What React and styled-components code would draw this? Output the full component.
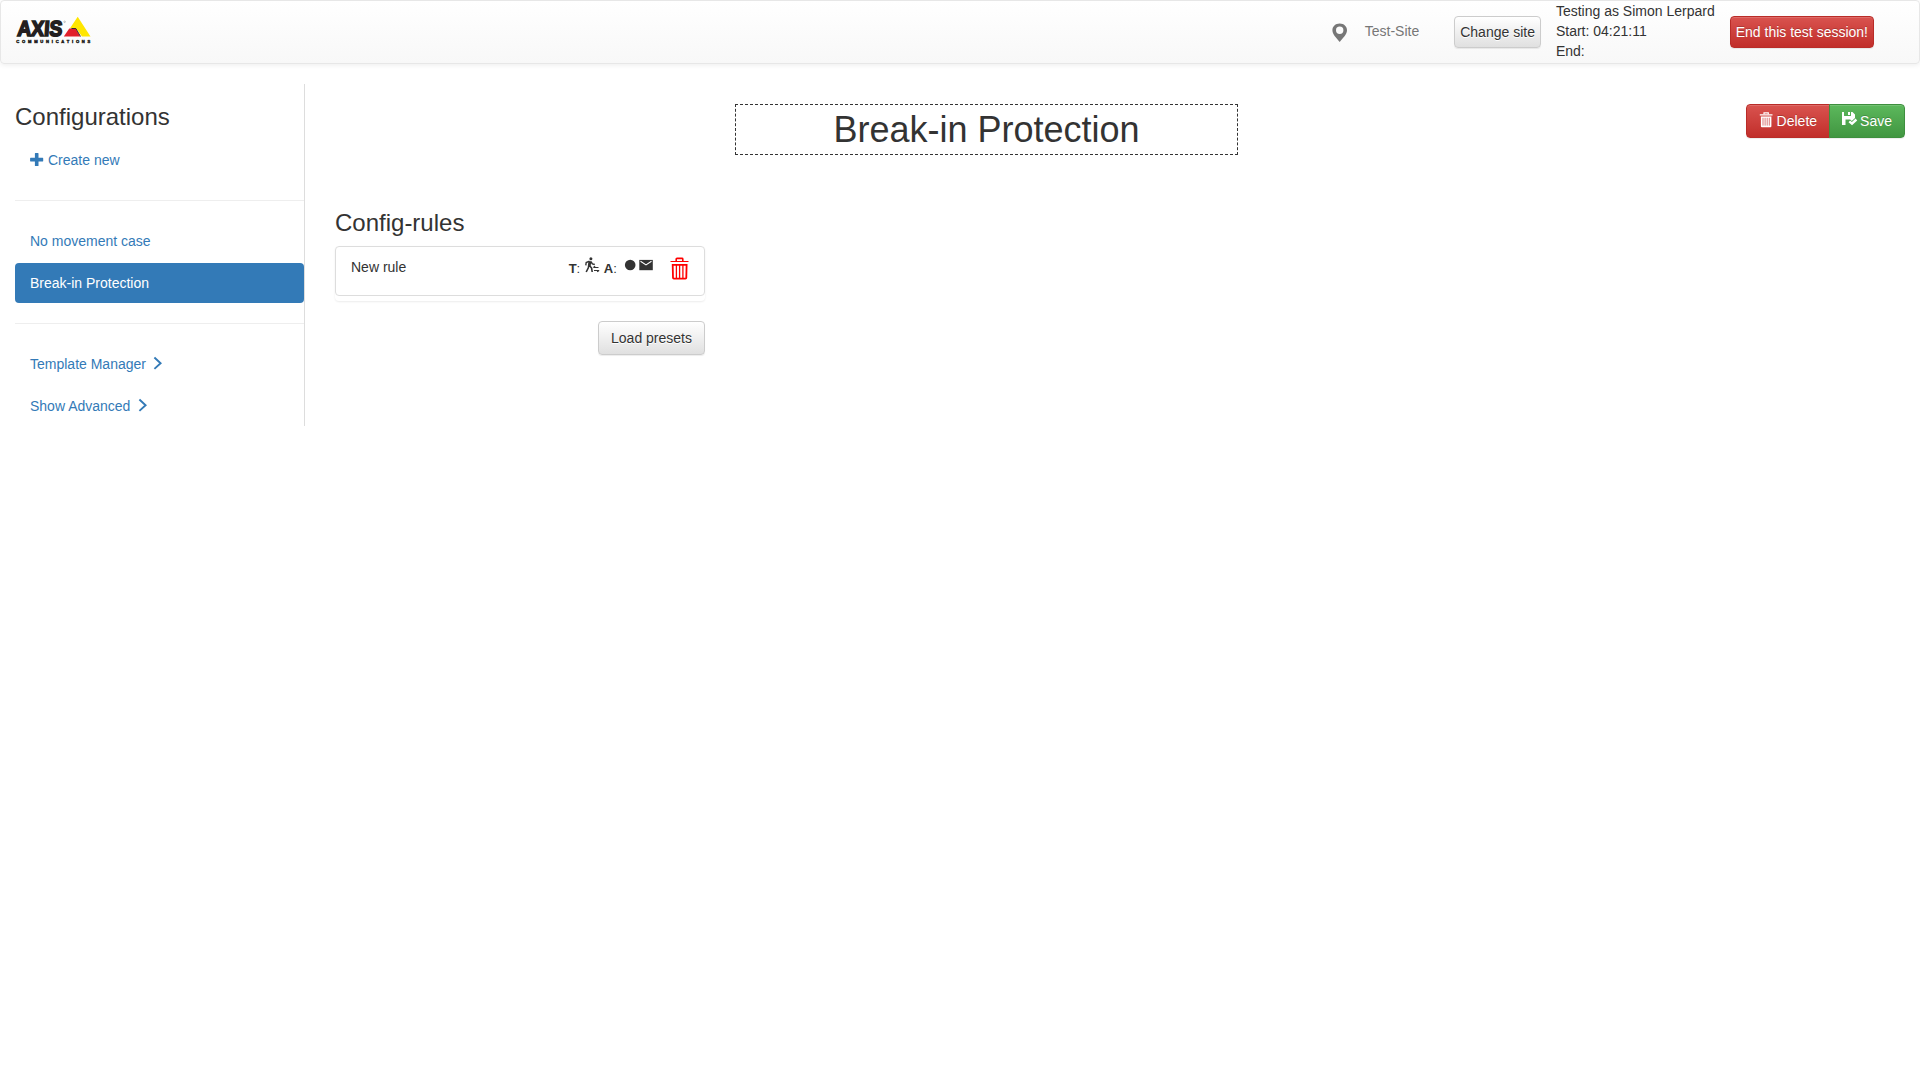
import React from "react";
import styled, { createGlobalStyle, css } from "styled-components";

const Global = createGlobalStyle`
  *, *::before, *::after { box-sizing: border-box; }
  body {
    margin: 0;
    background: #fff;
    color: #333;
    font: 14px/20px "Liberation Sans", Arial, sans-serif;
  }
  svg { display: block; flex: none; overflow: visible; }
`;

const Navbar = styled.header`
  display: flex;
  justify-content: space-between;
  height: 64px;
  margin-bottom: 20px;
  padding: 0 45px 0 15px;
  border: 1px solid #e7e7e7;
  border-radius: 4px;
  background: linear-gradient(#fff, #f8f8f8);
  box-shadow: inset 0 1px 0 rgba(255, 255, 255, 0.15), 0 1px 5px rgba(0, 0, 0, 0.075);
`;

const Brand = styled.a`
  padding-top: 14px;
`;

const NavRight = styled.div`
  display: flex;
  align-items: flex-start;
`;

const Site = styled.div`
  display: flex;
  align-items: flex-start;
  gap: 17px;
  margin: 20px 35px 0 0;
  color: #777;
  svg { margin-top: 2px; }
`;

const Session = styled.div`
  margin: 0 15px;
`;

const tones = {
  plain: css`
    color: #333;
    border-color: #ccc;
    background: linear-gradient(#fff, #e0e0e0);
    text-shadow: 0 1px 0 #fff;
  `,
  danger: css`
    color: #fff;
    border-color: #b92c28;
    background: linear-gradient(#d9534f, #c12e2a);
  `,
  success: css`
    color: #fff;
    border-color: #3e8f3e;
    background: linear-gradient(#5cb85c, #419641);
  `,
};

const Button = styled.button`
  display: inline-flex;
  align-items: flex-start;
  gap: 4px;
  margin: 0;
  padding: ${(p) => (p.$compact ? "5px" : "6px 12px")};
  border: 1px solid;
  border-radius: 4px;
  font: inherit;
  white-space: nowrap;
  text-shadow: 0 -1px 0 rgba(0, 0, 0, 0.2);
  box-shadow: inset 0 1px 0 rgba(255, 255, 255, 0.15), 0 1px 1px rgba(0, 0, 0, 0.075);
  svg { margin-top: 1px; }
  ${(p) => tones[p.$tone || "plain"]}
`;

const NavButton = styled(Button)`
  margin-top: 15px;
`;

const Page = styled.div`
  display: grid;
  grid-template-columns: 290px 1fr;
  align-items: start;
  padding: 0 15px;
`;

const Sidebar = styled.aside`
  border-right: 1px solid #ddd;
  padding-top: 20px;
`;

const Heading = styled.h3`
  margin: 0 0 10px;
  font-size: 24px;
  font-weight: 400;
  line-height: 26.4px;
`;

const NavList = styled.nav`
  display: flex;
  flex-direction: column;
  gap: 2px;
`;

const NavItem = styled.a`
  display: flex;
  gap: ${(p) => p.$gap || 4}px;
  padding: 10px 15px;
  border-radius: 4px;
  color: ${(p) => (p.$active ? "#fff" : "#337ab7")};
  background: ${(p) => (p.$active ? "#337ab7" : "transparent")};
  svg { margin-top: 2.6px; }
`;

const Divider = styled.hr`
  margin: 20px 0;
  border: 0;
  border-top: 1px solid #eee;
`;

const Main = styled.main`
  padding: 20px 0 0 30px;
`;

const TitleRow = styled.div`
  display: grid;
  grid-template-columns: 400px 503px 1fr;
  align-items: start;
  margin-bottom: 54.6px;
`;

const Title = styled.h1`
  grid-column: 2;
  margin: 0;
  padding: 5px;
  border: 1px dashed #333;
  font-size: 36px;
  font-weight: 400;
  line-height: 39px;
  text-align: center;
`;

const ButtonGroup = styled.div`
  display: flex;
  justify-self: end;
  ${Button}:first-child { border-radius: 4px 0 0 4px; }
  ${Button}:last-child { margin-left: -1px; border-radius: 0 4px 4px 0; }
`;

const Rules = styled.section`
  width: 370px;
`;

const RuleGroup = styled.div`
  padding-bottom: 5px;
  margin-bottom: 20px;
  border-radius: 4px;
  box-shadow: 0 1px 2px rgba(0, 0, 0, 0.08);
`;

const Rule = styled.div`
  display: flex;
  align-items: flex-start;
  height: 50px;
  padding: 10px 15px;
  border: 1px solid #ddd;
  border-radius: 4px;
`;

const RuleName = styled.span`
  flex: 1;
`;

const RuleSummary = styled.div`
  display: flex;
  align-items: flex-start;
  margin-right: 17px;
  font-size: 13px;
  line-height: 22px;
`;

const Mark = styled.span`
  padding: ${(p) => p.$pad};
`;

const Footer = styled.div`
  display: flex;
  justify-content: flex-end;
`;

function AxisLogo() {
  return (
    <svg width="76" height="30" viewBox="0 0 76 30">
      <path d="M61.700 1.800 74.500 21.500H66L60 13.300H54z" fill="#ffe600" />
      <path d="M53.300 13.500H59.700L64.200 21.500H47.800z" fill="#e1202b" />
      <path d="M55.500 13.500H59.900L64.500 21.500" fill="none" stroke="#231f20" strokeWidth=".9" />
      <g fill="#231f20" fontFamily='"Liberation Sans", Arial, sans-serif' fontWeight="700">
        <text x="2.400" y="20.900" fontSize="21.600" textLength="45" lengthAdjust="spacingAndGlyphs" stroke="#231f20" strokeWidth="1.700" transform="skewX(-4)">AXIS</text>
        <text x=".3" y="27.700" fontSize="4.100" textLength="74" lengthAdjust="spacing" stroke="#231f20" strokeWidth=".45">COMMUNICATIONS</text>
      </g>
      <circle cx="48.600" cy="6.800" r=".8" fill="none" stroke="#777" strokeWidth=".4" />
    </svg>
  );
}

const PinIcon = () => (
  <svg width="16" height="20" viewBox="0 0 16 20">
    <path fillRule="evenodd" fill="#777" d="M7.700.500C3.500.500.400 3.400.400 7.200c0 4.200 4.100 7.600 7.300 11.800C10.900 14.800 15 11.400 15 7.200c0-3.800-3.100-6.700-7.300-6.700zm0 3.100a3.700 3.700 0 1 1 0 7.400 3.700 3.700 0 0 1 0-7.400z" />
  </svg>
);

const PlusIcon = () => (
  <svg width="14" height="14" viewBox="0 0 14 14">
    <path fill="#337ab7" d="M5.300 0h2.800q.4 0 .4.400V4.800h4.300q.4 0 .4.400v2.800q0 .4-.4.400H8.500v4.300q0 .4-.4.400H5.300q-.4 0-.4-.4V8.400H.5q-.4 0-.4-.4V5.200q0-.4.4-.4h4.400V.4q0-.4.400-.4z" />
  </svg>
);

const ChevronIcon = () => (
  <svg width="10" height="14" viewBox="0 0 10 14">
    <path fill="none" stroke="#337ab7" strokeWidth="1.900" d="M1.400.500 7.600 6.200 1.400 11.900" />
  </svg>
);

const TrashIcon = () => (
  <svg width="14" height="16" viewBox="0 0 14 16">
    <path fill="none" stroke="#fff" d="M5 2.200V.900h4.300v1.300" strokeWidth="1.200" />
    <path fill="#fff" d="M.800 2.200h12.700v1.200H.800zM1.900 4.600h10.500v9.600q0 1-1 1H2.900q-1 0-1-1z" />
    <path stroke="#cc4440" strokeWidth=".7" d="M4 5.800v7.800M6.100 5.800v7.800M8.200 5.800v7.800M10.300 5.800v7.800" />
  </svg>
);

const SaveIcon = () => (
  <svg width="14" height="14" viewBox="0 0 14 14">
    <path fill="#fff" fillRule="evenodd" d="M0 0h2v3.500q0 .5.500.500h6q.5 0 .5-.500V0h1.500L13 2.500V6L9.800 9 8.200 7.400H3.500V13H0zM6 0h2v3H6z" />
    <path fill="none" stroke="#fff" strokeWidth="2.400" d="M7.300 9.300 10 11.600 14.400 7.500" />
  </svg>
);

const RedTrashIcon = () => (
  <svg width="19" height="24" viewBox="0 0 19 24">
    <g fill="none" stroke="#f00">
      <path strokeWidth="1.600" d="M6.200 4V2q0-.6.800-.6h5q.800 0 .800.600V4" />
      <path strokeWidth="1" d="M.500 4.500h18" />
      <path strokeWidth="1.800" d="M2.700 7.900h13.900l-.3 12.900q0 .9-.9.900H3.900q-.9 0-.9-.9z" />
      <path strokeWidth="1.300" d="M6.400 8v13.500M9.600 8v13.500M12.900 8v13.500" />
    </g>
  </svg>
);

const WalkIcon = () => (
  <svg width="15" height="16" viewBox="0 0 15 16">
    <circle cx="5.900" cy="1.700" r="1.500" fill="#333" />
    <g fill="none" stroke="#333">
      <path strokeWidth="2.800" d="M4.900 4.200 4.200 9" />
      <path strokeWidth="1.400" d="M4.500 4.200 1.200 5.500.800 8.300M5.600 4.500l1.800 2.300 2.400.700" />
      <path strokeWidth="1.600" d="M3.900 8.200 3.200 11 1.200 15M4.600 8.700l2 2.400.600 3.900" />
      <path strokeWidth="1.200" d="M8.300 10.500h5.200M9 13.500h5.200M8.500 10.500l1.600-1.300M13.900 13.500l-1.700 1.300" />
    </g>
  </svg>
);

const DotIcon = () => (
  <svg width="11" height="14" viewBox="0 0 11 14">
    <circle cx="5.200" cy="8" r="5.300" fill="#333" />
  </svg>
);

const MailIcon = () => (
  <svg width="14" height="14" viewBox="0 0 14 14">
    <path fill="#333" d="M0.300 2.900h13.500v10.300H0.300z" />
    <path fill="none" stroke="#fff" strokeWidth="1.100" d="M1.500 4.300 7 7.900 12.500 4.300" />
  </svg>
);

export default function App() {
  return (
    <>
      <Global />
      <Navbar>
        <Brand><AxisLogo /></Brand>
        <NavRight>
          <Site><PinIcon /><span>Test-Site</span></Site>
          <NavButton $compact>Change site</NavButton>
          <Session>
            <div>Testing as Simon Lerpard</div>
            <div>Start: 04:21:11</div>
            <div>End:</div>
          </Session>
          <NavButton $compact $tone="danger">End this test session!</NavButton>
        </NavRight>
      </Navbar>
      <Page>
        <Sidebar>
          <Heading>Configurations</Heading>
          <NavList>
            <NavItem><PlusIcon />Create new</NavItem>
          </NavList>
          <Divider />
          <NavList>
            <NavItem>No movement case</NavItem>
            <NavItem $active>Break-in Protection</NavItem>
          </NavList>
          <Divider />
          <NavList>
            <NavItem $gap={7}>Template Manager<ChevronIcon /></NavItem>
            <NavItem $gap={8}>Show Advanced<ChevronIcon /></NavItem>
          </NavList>
        </Sidebar>
        <Main>
          <TitleRow>
            <Title>Break-in Protection</Title>
            <ButtonGroup>
              <Button $tone="danger"><TrashIcon />Delete</Button>
              <Button $tone="success"><SaveIcon />Save</Button>
            </ButtonGroup>
          </TitleRow>
          <Rules>
            <Heading>Config-rules</Heading>
            <RuleGroup>
              <Rule>
                <RuleName>New rule</RuleName>
                <RuleSummary>
                  <Mark $pad="1px 4.6px 0 0"><b>T</b>:</Mark>
                  <WalkIcon />
                  <Mark $pad="1px 8.2px 0 4px"><b>A</b>:</Mark>
                  <DotIcon />
                  <Mark $pad="0 0 0 3px"><MailIcon /></Mark>
                </RuleSummary>
                <RedTrashIcon />
              </Rule>
            </RuleGroup>
            <Footer><Button>Load presets</Button></Footer>
          </Rules>
        </Main>
      </Page>
    </>
  );
}
